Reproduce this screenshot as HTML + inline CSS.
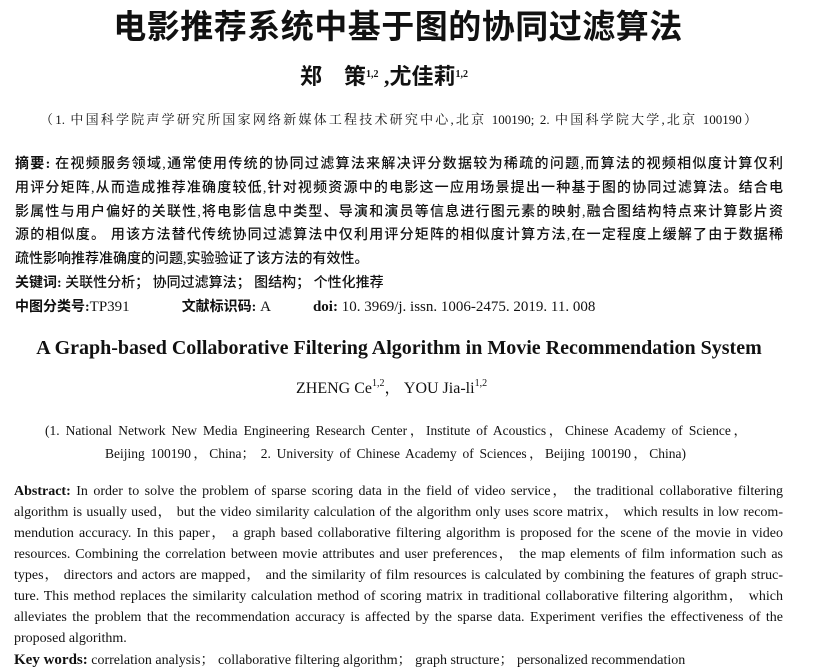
<!DOCTYPE html>
<html><head><meta charset="utf-8"><style>
body{margin:0;width:832px;height:672px;background:#fff;position:relative;overflow:hidden;color:#111}
.l{position:absolute;white-space:nowrap;line-height:20px}
.j{text-align:justify;text-align-last:justify;white-space:normal}
.cn{font-family:"Liberation Serif","Noto Sans CJK SC",sans-serif}
.s{font-family:"Liberation Serif","Noto Serif CJK SC",serif}
sup{font-size:10px;vertical-align:7px;line-height:0}
b{font-weight:bold}
</style></head><body>
<div class="l cn" style="left:90px;top:9px;width:616px;font-size:33px;line-height:38px;font-weight:bold;text-align:center;letter-spacing:0.5px">电影推荐系统中基于图的协同过滤算法</div>
<div class="l cn" style="left:300px;top:63px;font-size:22px;line-height:28px;font-weight:bold">郑&nbsp;&nbsp;&nbsp;&nbsp;策<sup>1,2</sup>&nbsp;,尤佳莉<sup>1,2</sup></div>
<div class="l j s" style="left:40px;top:110px;width:717px;font-size:13px">（1. 中国科学院声学研究所国家网络新媒体工程技术研究中心,北京 100190; 2. 中国科学院大学,北京 100190）</div>
<div class="cn" style="font-size:14px;font-weight:500">
<div class="l j" style="left:15px;top:155px;width:768px"><b>摘要:</b> 在视频服务领域,通常使用传统的协同过滤算法来解决评分数据较为稀疏的问题,而算法的视频相似度计算仅利</div>
<div class="l j" style="left:15px;top:179px;width:768px">用评分矩阵,从而造成推荐准确度较低,针对视频资源中的电影这一应用场景提出一种基于图的协同过滤算法。结合电</div>
<div class="l j" style="left:15px;top:203px;width:768px">影属性与用户偏好的关联性,将电影信息中类型、导演和演员等信息进行图元素的映射,融合图结构特点来计算影片资</div>
<div class="l j" style="left:15px;top:226px;width:768px">源的相似度。 用该方法替代传统协同过滤算法中仅利用评分矩阵的相似度计算方法,在一定程度上缓解了由于数据稀</div>
<div class="l" style="left:15px;top:250px">疏性影响推荐准确度的问题,实验验证了该方法的有效性。</div>
<div class="l" style="left:15px;top:274px"><b>关键词:</b> 关联性分析； 协同过滤算法； 图结构； 个性化推荐</div>
<div class="l" style="left:15px;top:297px"><b>中图分类号:</b><span class="s" style="font-size:15px">TP391</span><span style="margin-left:52px"><b>文献标识码:</b></span><span class="s" style="font-size:15px"> A</span><span class="s" style="margin-left:42px;font-size:15px"><b>doi:</b> 10. 3969/j. issn. 1006-2475. 2019. 11. 008</span></div>
</div>
<div class="l s" style="left:20px;top:335px;width:758px;font-size:20px;line-height:26px;font-weight:bold;text-align:center">A Graph-based Collaborative Filtering Algorithm in Movie Recommendation System</div>
<div class="l s" style="left:296px;top:379px;font-size:16px">ZHENG Ce<sup>1,2</sup>， YOU Jia-li<sup>1,2</sup></div>
<div class="l j s" style="left:45px;top:421px;width:702px;font-size:13.5px">(1. National Network New Media Engineering Research Center，Institute of Acoustics，Chinese Academy of Science，</div>
<div class="l j s" style="left:105px;top:444px;width:581px;font-size:13.5px">Beijing 100190，China； 2. University of Chinese Academy of Sciences，Beijing 100190，China)</div>
<div class="s" style="font-size:14px">
<div class="l j" style="left:14px;top:482px;width:769px"><b>Abstract:</b> In order to solve the problem of sparse scoring data in the field of video service， the traditional collaborative filtering</div>
<div class="l j" style="left:14px;top:503px;width:769px">algorithm is usually used， but the video similarity calculation of the algorithm only uses score matrix， which results in low recom-</div>
<div class="l j" style="left:14px;top:524px;width:769px">mendution accuracy. In this paper， a graph based collaborative filtering algorithm is proposed for the scene of the movie in video</div>
<div class="l j" style="left:14px;top:545px;width:769px">resources. Combining the correlation between movie attributes and user preferences， the map elements of film information such as</div>
<div class="l j" style="left:14px;top:566px;width:769px">types， directors and actors are mapped， and the similarity of film resources is calculated by combining the features of graph struc-</div>
<div class="l j" style="left:14px;top:587px;width:769px">ture. This method replaces the similarity calculation method of scoring matrix in traditional collaborative filtering algorithm， which</div>
<div class="l j" style="left:14px;top:608px;width:769px">alleviates the problem that the recommendation accuracy is affected by the sparse data. Experiment verifies the effectiveness of the</div>
<div class="l" style="left:14px;top:629px">proposed algorithm.</div>
<div class="l" style="left:14px;top:650px"><b style="font-size:15px">Key words:</b> correlation analysis； collaborative filtering algorithm； graph structure； personalized recommendation</div>
</div>
</body></html>
